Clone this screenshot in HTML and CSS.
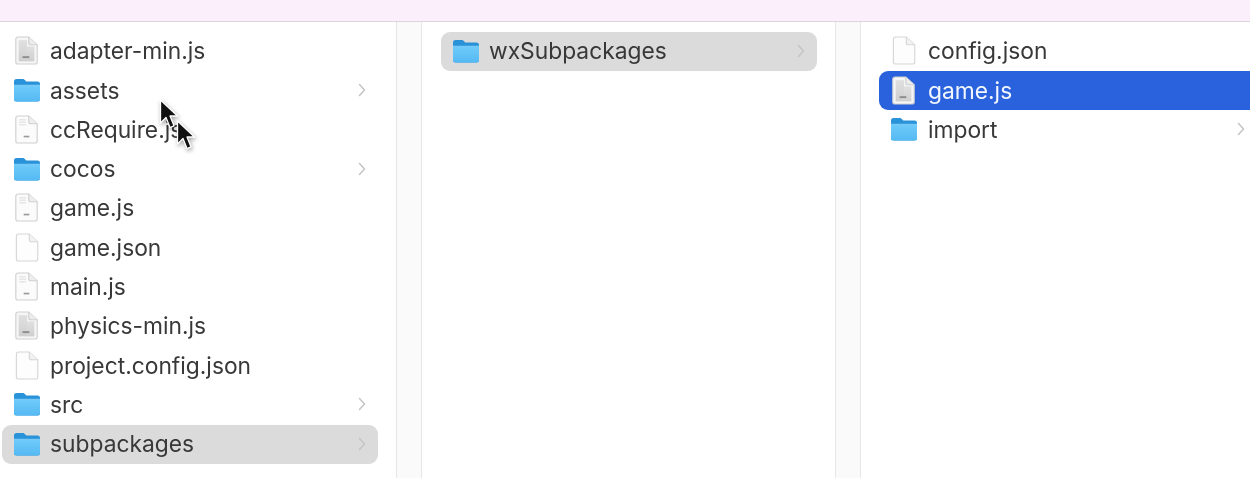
FILE: index.html
```html
<!DOCTYPE html>
<html lang="en">
<head>
<meta charset="utf-8">
<title>Finder column view</title>
<link rel="stylesheet" href="styles.css">
</head>
<body>
<svg class="defs" width="0" height="0" aria-hidden="true">
  <defs>
    <linearGradient id="fbody" x1="0" y1="0" x2="0" y2="1">
      <stop offset="0" stop-color="#6fcbfa"/>
      <stop offset="1" stop-color="#55b9f3"/>
    </linearGradient>
    <linearGradient id="gray" x1="0" y1="0" x2="0" y2="1">
      <stop offset="0" stop-color="#e0e0e0"/>
      <stop offset="1" stop-color="#cfcfcf"/>
    </linearGradient>
    <symbol id="folder" viewBox="0 0 28 24">
      <path d="M1 3.500A2.500 2.500 0 0 1 3.500 1h6.200c1 0 1.500.4 2.200 1.100L13.200 3.400H24.500A2.500 2.500 0 0 1 27 5.900V21a2.500 2.500 0 0 1-2.500 2.500h-21A2.500 2.500 0 0 1 1 21Z" fill="#2a92d8"/>
      <path d="M1 7.200h26V21a2.500 2.500 0 0 1-2.500 2.500h-21A2.500 2.500 0 0 1 1 21Z" fill="url(#fbody)"/>
      <path d="M1 7.200h26" stroke="#9adcff" stroke-width=".6"/>
    </symbol>
    <symbol id="doc-plain" viewBox="0 0 24 28" preserveAspectRatio="none">
      <path d="M3 3a2 2 0 0 1 2-2h9.500L22 8.500V25a2 2 0 0 1-2 2H5a2 2 0 0 1-2-2Z" fill="#fdfdfd" stroke="#d6d6d6" stroke-width="1"/>
      <path d="M14.500 1v5.500a2 2 0 0 0 2 2H22" fill="#f2f2f2" stroke="#d6d6d6" stroke-width="1"/>
    </symbol>
    <symbol id="doc-js" viewBox="0 0 24 28" preserveAspectRatio="none">
      <path d="M2.500 3a2 2 0 0 1 2-2h9.500L21.500 8.500V25a2 2 0 0 1-2 2h-15a2 2 0 0 1-2-2Z" fill="#fbfbfb" stroke="#d0d0d0" stroke-width="1"/>
      <path d="M14 1v5.500a2 2 0 0 0 2 2h5.500" fill="#eeeeee" stroke="#d0d0d0" stroke-width="1"/>
      <path d="M5.500 4.500h6M5.500 7h6M5.500 9.500h6" stroke="#e6e6e6" stroke-width="1.400"/>
      <rect x="9.500" y="20" width="5" height="1.600" fill="#9a9a9a"/>
    </symbol>
    <symbol id="doc-exec" viewBox="0 0 24 28" preserveAspectRatio="none">
      <path d="M2.500 3a2 2 0 0 1 2-2h9.500L21.500 8.500V25a2 2 0 0 1-2 2h-15a2 2 0 0 1-2-2Z" fill="#f6f6f6" stroke="#d0d0d0" stroke-width="1"/>
      <path d="M14 1v5.500a2 2 0 0 0 2 2h5.500" fill="#ececec" stroke="#d0d0d0" stroke-width="1"/>
      <rect x="5" y="4" width="7.500" height="20.500" fill="url(#gray)"/>
      <rect x="12.500" y="10" width="6.500" height="14.500" fill="url(#gray)"/>
      <rect x="8.500" y="19.500" width="6" height="1.800" fill="#8c8c8c"/>
    </symbol>
    <symbol id="cursor" viewBox="0 0 20 32">
      <path d="M1.500 1v23l5.500-5.500 4 10 4-1.700-4-9.800h7.500Z" fill="#111" stroke="#fff" stroke-width="1.300" stroke-linejoin="round"/>
    </symbol>
    <symbol id="chev" viewBox="0 0 8 14">
      <path d="M1.500 1.500 6.500 7l-5 5.500" fill="none" stroke="#c4c4c4" stroke-width="1.500" stroke-linecap="round" stroke-linejoin="round"/>
    </symbol>
  </defs>
</svg>

<div class="window">
  <header class="toolbar"></header>
  <main class="browser">
    <section class="pane pane-first">
      <ul class="list">
        <li class="row"><svg class="ic doc"><use href="#doc-exec"/></svg><span class="name">adapter-min.js</span></li>
        <li class="row"><svg class="ic folder"><use href="#folder"/></svg><span class="name">assets</span><svg class="chev"><use href="#chev"/></svg></li>
        <li class="row"><svg class="ic doc"><use href="#doc-js"/></svg><span class="name">ccRequire.js</span></li>
        <li class="row"><svg class="ic folder"><use href="#folder"/></svg><span class="name">cocos</span><svg class="chev"><use href="#chev"/></svg></li>
        <li class="row"><svg class="ic doc"><use href="#doc-js"/></svg><span class="name">game.js</span></li>
        <li class="row"><svg class="ic doc"><use href="#doc-plain"/></svg><span class="name">game.json</span></li>
        <li class="row"><svg class="ic doc"><use href="#doc-js"/></svg><span class="name">main.js</span></li>
        <li class="row"><svg class="ic doc"><use href="#doc-exec"/></svg><span class="name">physics-min.js</span></li>
        <li class="row"><svg class="ic doc"><use href="#doc-plain"/></svg><span class="name">project.config.json</span></li>
        <li class="row"><svg class="ic folder"><use href="#folder"/></svg><span class="name">src</span><svg class="chev"><use href="#chev"/></svg></li>
        <li class="row is-open"><svg class="ic folder"><use href="#folder"/></svg><span class="name">subpackages</span><svg class="chev"><use href="#chev"/></svg></li>
      </ul>
    </section>
    <div class="gutter"></div>
    <section class="pane pane-second">
      <ul class="list">
        <li class="row is-open"><svg class="ic folder"><use href="#folder"/></svg><span class="name">wxSubpackages</span><svg class="chev"><use href="#chev"/></svg></li>
      </ul>
    </section>
    <div class="gutter"></div>
    <section class="pane pane-third">
      <ul class="list">
        <li class="row"><svg class="ic doc"><use href="#doc-plain"/></svg><span class="name">config.json</span></li>
        <li class="row is-selected"><svg class="ic doc"><use href="#doc-exec"/></svg><span class="name">game.js</span></li>
        <li class="row"><svg class="ic folder"><use href="#folder"/></svg><span class="name">import</span><svg class="chev"><use href="#chev"/></svg></li>
      </ul>
    </section>
  </main>
  <svg class="cursor cursor-a"><use href="#cursor"/></svg>
  <svg class="cursor cursor-b"><use href="#cursor"/></svg>
</div>
</body>
</html>
```
FILE: styles.css
```css
* { box-sizing: border-box; }
html, body { margin: 0; height: 100%; overflow: hidden; background: #fff; }
.defs { position: absolute; }
.window {
  position: relative;
  width: 1250px;
  height: 478px;
  overflow: hidden;
  display: flex;
  flex-direction: column;
  font-family: Inter, "Liberation Sans", sans-serif;
  filter: blur(0.45px);
}
.toolbar {
  flex: 0 0 22px;
  background: #fbeffb;
  border-bottom: 1px solid #dcd6dc;
}
.browser { flex: 1; display: flex; min-height: 0; }
.pane { background: #fff; }
.pane-first { flex: 0 0 396px; padding-left: 2px; padding-right: 18px; }
.pane-second { flex: 0 0 413px; padding-left: 19px; padding-right: 18px; }
.pane-third { flex: 1; padding-left: 18px; }
.gutter {
  flex: 0 0 26px;
  background: #fafafa;
  border-left: 1px solid #e6e6e6;
  border-right: 1px solid #e6e6e6;
}
.list { list-style: none; margin: 0; padding: 9.600px 0 0; }
.row {
  display: flex;
  align-items: center;
  height: 39.300px;
  padding: 0 12px 1px 11px;
  border-radius: 9px;
  font-size: 22.800px;
  color: #383838;
}
.pane-third .row { padding-right: 5px; border-radius: 9px 0 0 9px; }
.is-open { background: #dbdbdb; }
.pane-third .is-selected { background: #2962dc; color: #f2f6ff; }
.ic { flex: none; }
.folder { width: 28px; height: 24px; margin-right: 9px; }
.doc { width: 27px; height: 29px; margin-right: 10px; }
.pane-third .folder { margin-right: 10px; }
.pane-third .doc { margin-right: 11px; }
.name { flex: 1; white-space: nowrap; }
.chev { flex: none; width: 8px; height: 14px; }
.cursor { position: absolute; width: 20px; height: 32px; filter: drop-shadow(1px 2px 2px rgba(0,0,0,.35)); }
.cursor-a { left: 159px; top: 99px; }
.cursor-b { left: 176px; top: 120px; }
```
